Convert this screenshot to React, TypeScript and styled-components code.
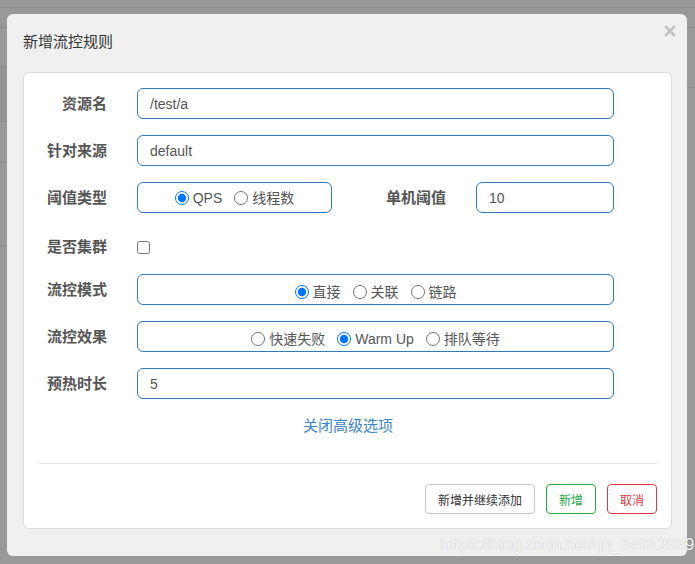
import React from "react";
import styled, { createGlobalStyle, css } from "styled-components";

const GlobalStyle = createGlobalStyle`
  html, body { margin: 0; padding: 0; }
  body {
    width: 695px;
    height: 564px;
    overflow: hidden;
    background: #999;
    font-family: "Liberation Sans", "Noto Sans CJK SC", sans-serif;
  }
  * { box-sizing: border-box; }
`;

const Stage = styled.div`
  position: relative;
  width: 695px;
  height: 564px;
  background: #999;
  overflow: hidden;
`;

/* dimmed page behind the modal */
const BackPage = styled.div`
  display: flex;
  flex-direction: column;
  height: 100%;
`;
const BackTop = styled.div`
  height: 8px;
  border-bottom: 1px solid #8d8d8d;
`;
const BackBody = styled.div`
  display: flex;
  flex: 1;
`;
const BackCol = styled.div`
  flex: 1;
  display: flex;
  flex-direction: column;
`;
const BackLine = styled.div<{ $h: number; $dark?: boolean }>`
  height: ${(p) => p.$h}px;
  border-bottom: 1px solid #8d8d8d;
  background: ${(p) => (p.$dark ? "#949494" : "transparent")};
`;

/* modal */
const Modal = styled.div`
  position: absolute;
  left: 7px;
  top: 14px;
  width: 680px;
  background: #f0f0f0;
  border-radius: 6px;
  padding: 0 15px 27px 16px;
  display: flex;
  flex-direction: column;
`;

const Header = styled.div`
  height: 58px;
  display: flex;
  justify-content: space-between;
  align-items: flex-start;
`;

const Title = styled.h4`
  margin: 18px 0 0 0;
  font-size: 15px;
  line-height: 20px;
  font-weight: normal;
  color: #333;
`;

const Close = styled.button`
  margin: 11px -4px 0 0;
  padding: 0;
  width: 12px;
  height: 12px;
  border: none;
  background: transparent;
  display: flex;
  cursor: pointer;
`;

const Panel = styled.div`
  background: #fff;
  border: 1px solid #dcdcdc;
  border-radius: 6px;
  padding: 15px 14px 14px 15px;
  display: flex;
  flex-direction: column;
`;

const Form = styled.div`
  display: flex;
  flex-direction: column;
  gap: 16px;
  padding-right: 43px;
`;

const Row = styled.div<{ $check?: boolean }>`
  display: flex;
  align-items: center;
  height: ${(p) => (p.$check ? "29px" : "31px")};
  ${(p) =>
    p.$check &&
    css`
      padding-top: 7px;
    `}
`;

const Label = styled.label<{ $offset?: number }>`
  width: 68px;
  flex: none;
  margin-left: ${(p) => p.$offset ?? 0}px;
  margin-right: 30px;
  text-align: right;
  font-size: 15px;
  line-height: 20px;
  font-weight: bold;
  color: #555;
  white-space: nowrap;
`;

const fieldBorder = css`
  height: 31px;
  border: 1px solid #337ab7;
  border-radius: 6px;
`;

const TextInput = styled.input`
  ${fieldBorder};
  flex: 1;
  min-width: 0;
  padding: 0 12px;
  font-family: "Liberation Sans", "Noto Sans CJK SC", sans-serif;
  font-size: 14px;
  color: #555;
  background: #fff;
  outline: none;
`;

const RadioBox = styled.div<{ $width?: number; $low?: boolean }>`
  ${fieldBorder};
  ${(p) => (p.$width ? `width: ${p.$width}px; flex: none;` : "flex: 1;")}
  display: flex;
  align-items: center;
  justify-content: center;
  gap: 12px;
  padding-top: ${(p) => (p.$low ? "4px" : "0")};
`;

const RadioOption = styled.label`
  display: inline-flex;
  align-items: center;
  gap: 4px;
  font-size: 14px;
  line-height: 18px;
  color: #555;
  white-space: nowrap;
`;

const Radio = styled.input`
  width: 14px;
  height: 14px;
  margin: 0;
`;

const Checkbox = styled.input`
  width: 13px;
  height: 13px;
  margin: 0;
`;

const Toggle = styled.a`
  margin-top: 15px;
  height: 24px;
  line-height: 24px;
  text-align: center;
  font-size: 15px;
  color: #3b84c4;
  cursor: pointer;
`;

const Divider = styled.div`
  margin-top: 25px;
  border-top: 1px solid #e3e3e3;
`;

const Footer = styled.div`
  margin-top: 20px;
  display: flex;
  justify-content: flex-end;
  gap: 11px;
`;

const tones = {
  default: { border: "#c8c8c8", color: "#333" },
  success: { border: "#28a745", color: "#28a745" },
  danger: { border: "#dc3545", color: "#dc3545" },
};

const Button = styled.button<{ $tone: keyof typeof tones }>`
  height: 30px;
  padding: 0 12px;
  display: inline-flex;
  align-items: center;
  background: #fff;
  border: 1px solid ${(p) => tones[p.$tone].border};
  color: ${(p) => tones[p.$tone].color};
  border-radius: 4px;
  font-family: "Liberation Sans", "Noto Sans CJK SC", sans-serif;
  font-size: 12px;
  cursor: pointer;
`;

/* image watermark lying over the screenshot */
const Watermark = styled.div`
  position: absolute;
  left: 441px;
  top: 534px;
  font-size: 16.5px;
  line-height: 20px;
  white-space: nowrap;
  color: rgba(255, 255, 255, 0.92);
  text-shadow: 0 0 1px rgba(0, 0, 0, 0.3);
  pointer-events: none;
`;

type Opt = { label: string; checked?: boolean };

const RadioGroup: React.FC<{ name: string; options: Opt[]; width?: number; low?: boolean }> = ({
  name,
  options,
  width,
  low,
}) => (
  <RadioBox $width={width} $low={low}>
    {options.map((o) => (
      <RadioOption key={o.label}>
        <Radio type="radio" name={name} defaultChecked={o.checked} />
        {o.label}
      </RadioOption>
    ))}
  </RadioBox>
);

export default function App() {
  return (
    <>
      <GlobalStyle />
      <Stage>
        <BackPage>
          <BackTop />
          <BackBody>
            <BackCol>
              <BackLine $h={20} />
              <BackLine $h={39} />
              <BackLine $h={55} $dark />
              <BackLine $h={41} />
              <BackLine $h={83} />
            </BackCol>
            <BackCol>
              <BackLine $h={20} />
              <BackLine $h={60} />
            </BackCol>
          </BackBody>
        </BackPage>

        <Modal>
          <Header>
            <Title>新增流控规则</Title>
            <Close aria-label="close">
              <svg width="12" height="12" viewBox="0 0 12 12">
                <path
                  d="M1.2 1.2 L10.8 10.8 M10.8 1.2 L1.2 10.8"
                  stroke="#c0c0c0"
                  strokeWidth="2.5"
                  strokeLinecap="butt"
                  fill="none"
                />
              </svg>
            </Close>
          </Header>

          <Panel>
            <Form>
              <Row>
                <Label>资源名</Label>
                <TextInput defaultValue="/test/a" />
              </Row>
              <Row>
                <Label>针对来源</Label>
                <TextInput defaultValue="default" />
              </Row>
              <Row>
                <Label>阈值类型</Label>
                <RadioGroup
                  name="grade"
                  width={195}
                  options={[{ label: "QPS", checked: true }, { label: "线程数" }]}
                />
                <Label $offset={46}>单机阈值</Label>
                <TextInput defaultValue="10" />
              </Row>
              <Row $check>
                <Label>是否集群</Label>
                <Checkbox type="checkbox" />
              </Row>
              <Row>
                <Label>流控模式</Label>
                <RadioGroup
                  name="strategy"
                  low
                  options={[{ label: "直接", checked: true }, { label: "关联" }, { label: "链路" }]}
                />
              </Row>
              <Row>
                <Label>流控效果</Label>
                <RadioGroup
                  name="behavior"
                  low
                  options={[
                    { label: "快速失败" },
                    { label: "Warm Up", checked: true },
                    { label: "排队等待" },
                  ]}
                />
              </Row>
              <Row>
                <Label>预热时长</Label>
                <TextInput defaultValue="5" />
              </Row>
            </Form>

            <Toggle>关闭高级选项</Toggle>
            <Divider />
            <Footer>
              <Button $tone="default">新增并继续添加</Button>
              <Button $tone="success">新增</Button>
              <Button $tone="danger">取消</Button>
            </Footer>
          </Panel>
        </Modal>

        <Watermark>https://blog.csdn.net/qq_34912889</Watermark>
      </Stage>
    </>
  );
}
